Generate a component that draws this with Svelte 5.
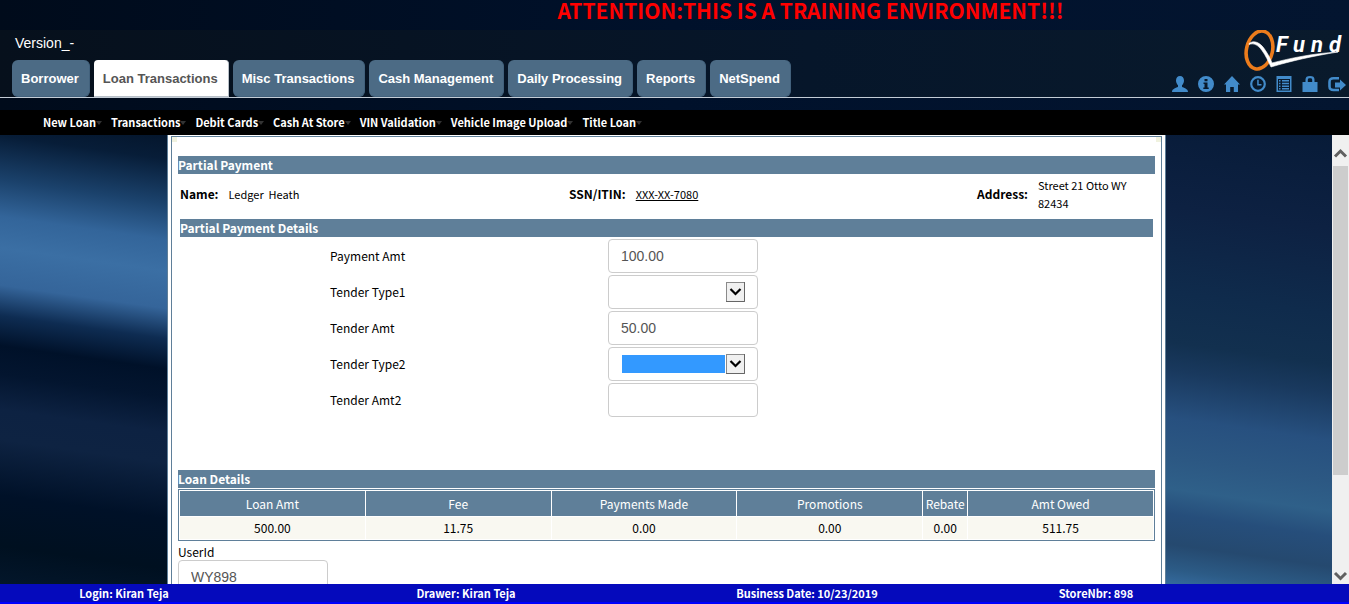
<script>
  const tabs = [
    'Borrower',
    'Loan Transactions',
    'Misc Transactions',
    'Cash Management',
    'Daily Processing',
    'Reports',
    'NetSpend'
  ];
  const menu = [
    'New Loan',
    'Transactions',
    'Debit Cards',
    'Cash At Store',
    'VIN Validation',
    'Vehicle Image Upload',
    'Title Loan'
  ];
  const loan = [
    ['Loan Amt', '500.00'],
    ['Fee', '11.75'],
    ['Payments Made', '0.00'],
    ['Promotions', '0.00'],
    ['Rebate', '0.00'],
    ['Amt Owed', '511.75']
  ];
  let activeTab = $state('Loan Transactions');
  let paymentAmt = $state('100.00');
  let tenderAmt = $state('50.00');
  let tenderAmt2 = $state('');
  let userId = $state('WY898');
</script>

{#snippet dropdown(id, selected)}
  <span class="select">
    <select {id} class="field" class:selected>
      <option value=""></option>
      <option>Cash</option>
      <option>Check</option>
    </select>
    <svg class="drop" viewBox="0 0 19 20" aria-hidden="true">
      <rect x="0.5" y="0.5" width="18" height="19" fill="#f0f0f0" stroke="#8a8a8a" />
      <path d="M18.5 0V19.5H0" fill="none" stroke="#666" />
      <path d="M4.5 7l5 5 5-5" fill="none" stroke="#000" stroke-width="2.2" />
    </svg>
  </span>
{/snippet}

<div class="app">
  <div class="attention">ATTENTION:THIS IS A TRAINING ENVIRONMENT!!!</div>

  <header>
    <div class="left">
      <div class="version">Version_-</div>
      <nav class="tabs">
        {#each tabs as tab}
          <button class:active={tab === activeTab} onclick={() => (activeTab = tab)}>{tab}</button>
        {/each}
      </nav>
    </div>
    <div class="right">
      <svg class="logo" width="103" height="42" viewBox="0 0 103 42" role="img" aria-label="QFund">
        <g transform="rotate(13 16.5 20)">
          <ellipse cx="16.5" cy="20" rx="13" ry="19.2" fill="none" stroke="#ec7c1c" stroke-width="3.6" />
        </g>
        <path d="M6 13.500C12 9 18.500 14 22.500 20.500C25.500 25 27.500 29 29 33C48 28 70 23.500 95 22C70 26 48 31 28 37C25.500 32 22.500 25 19 20.500C15.500 15.500 11 12.500 6 14.500Z" fill="#fff" stroke="#fff" stroke-width="0.6" />
        <text x="33 50 68 86" y="22">Fund</text>
      </svg>
      <div class="icons">
        <a href="#profile" aria-label="Profile">
          <svg viewBox="0 0 16 16"><path d="M8 0C5.500 0 4 1.800 4 4.500C4 6.800 5 8.300 6 9.200V10.800C4.500 12 0 12.600 0 16H16C16 12.600 11.500 12 10 10.800V9.200C11 8.300 12 6.800 12 4.500C12 1.800 10.500 0 8 0Z" /></svg>
        </a>
        <a href="#info" aria-label="Information">
          <svg viewBox="0 0 16 16"><path fill-rule="evenodd" d="M8 0A8 8 0 1 0 8 16A8 8 0 1 0 8 0ZM6.500 3H9.500V5.200H6.500ZM5.500 6.500H9.500V11.500H10.700V13H5.300V11.500H6.500V8H5.500Z" /></svg>
        </a>
        <a href="#home" aria-label="Home">
          <svg viewBox="0 0 16 16"><path d="M8 0L16 8.500H14V16H9.800V11H6.200V16H2V8.500H0Z" /></svg>
        </a>
        <a href="#clock" aria-label="Time clock">
          <svg viewBox="0 0 16 16"><circle cx="8" cy="8" r="6.800" fill="none" stroke="#428bca" stroke-width="2.200" /><path d="M7.200 3.800H8.700V8H11.500V9.500H7.200Z" /></svg>
        </a>
        <a href="#list" aria-label="List">
          <svg viewBox="0 0 16 16"><path fill-rule="evenodd" d="M0.500 0H15.500V16H0.500ZM2 3V14.500H14V3Z" /><path d="M3 4H4.500V5.500H3ZM6 4H13V5.500H6ZM3 6.700H4.500V8.200H3ZM6 6.700H13V8.200H6ZM3 9.400H4.500V10.900H3ZM6 9.400H13V10.900H6ZM3 12H4.500V13.500H3ZM6 12H13V13.500H6Z" /></svg>
        </a>
        <a href="#lock" aria-label="Lock">
          <svg viewBox="0 0 16 16"><path fill-rule="evenodd" d="M3.500 6V3.500C3.500 1 5 0 8 0S12.500 1 12.500 3.500V6H15.500V16H0.500V6ZM5.800 6H10.200V4C10.200 2.600 9.500 2.200 8 2.200S5.800 2.600 5.800 4Z" /></svg>
        </a>
        <a href="#logout" aria-label="Log out">
          <svg class="wide" viewBox="0 0 18 16"><path d="M11 2.200H5.500Q1.500 2.200 1.500 6V10.500Q1.500 14 5.500 14H11" fill="none" stroke="#428bca" stroke-width="2.600" /><path d="M7 6.500H12V3.500L18 9L12 14.500V11.500H7Z" /></svg>
        </a>
      </div>
    </div>
  </header>

  <nav class="menu">
    {#each menu as item}
      <a href="#menu">{item}<span class="caret"></span></a>
    {/each}
  </nav>

  <div class="body">
    <main>
      <div class="panel">
        <h1 class="bar">Partial Payment</h1>
        <div class="customer">
          <div class="pair"><b>Name:</b><span>Ledger&nbsp; Heath</span></div>
          <div class="pair"><b>SSN/ITIN:</b><a href="#ssn">XXX-XX-7080</a></div>
          <div class="pair"><b>Address:</b><span class="address">Street 21 Otto WY 82434</span></div>
        </div>
        <h2 class="bar inset">Partial Payment Details</h2>
        <form>
          <label for="payment-amt">Payment Amt</label>
          <input id="payment-amt" class="field" bind:value={paymentAmt} />
          <label for="tender-type1">Tender Type1</label>
          {@render dropdown('tender-type1', false)}
          <label for="tender-amt">Tender Amt</label>
          <input id="tender-amt" class="field" bind:value={tenderAmt} />
          <label for="tender-type2">Tender Type2</label>
          {@render dropdown('tender-type2', true)}
          <label for="tender-amt2">Tender Amt2</label>
          <input id="tender-amt2" class="field" bind:value={tenderAmt2} />
        </form>
        <h2 class="bar">Loan Details</h2>
        <table>
          <thead>
            <tr>
              {#each loan as [name]}<th class:narrow={name === 'Rebate'}>{name}</th>{/each}
            </tr>
          </thead>
          <tbody>
            <tr>
              {#each loan as [, value]}<td>{value}</td>{/each}
            </tr>
          </tbody>
        </table>
        <div class="user">
          <label for="user-id">UserId</label>
          <input id="user-id" class="field" bind:value={userId} />
        </div>
      </div>
    </main>
    <div class="scrollbar" aria-hidden="true">
      <svg viewBox="0 0 17 31"><path d="M3 21.500L8.500 16L14 21.500" /></svg>
      <div class="track"><div class="thumb"></div></div>
      <svg class="down" viewBox="0 0 17 17"><path d="M3 6L8.500 11.500L14 6" /></svg>
    </div>
  </div>

  <footer>
    <span>Login: Kiran Teja</span>
    <span>Drawer: Kiran Teja</span>
    <span>Business Date: 10/23/2019</span>
    <span>StoreNbr: 898</span>
  </footer>
</div>

<style>
  :global(body) {
    margin: 0;
    overflow: hidden;
  }
  .app {
    --slate: #5f7f99;
    --sans: 'Noto Sans CJK SC', 'Open Sans', sans-serif;
    --arial: 'Liberation Sans', Arial, sans-serif;
    display: flex;
    flex-direction: column;
    height: 100vh;
    font: 12px/18px var(--sans);
    color: #000;
    background: linear-gradient(90deg, #000b1b, #00112b 50%, #031530);
  }
  .app :global(*) {
    box-sizing: border-box;
  }
  .attention {
    height: 30px;
    padding-left: 272px;
    text-align: center;
    font-size: 21px;
    line-height: 20px;
    font-weight: 700;
    color: #f00;
  }
  header {
    display: flex;
    justify-content: space-between;
    height: 68px;
    border-bottom: 1px solid #c3ccd6;
    background: linear-gradient(90deg, #06101c, #06162a 60%, #091a2c);
  }
  .left {
    padding-left: 12px;
  }
  .version {
    height: 30px;
    padding-left: 3px;
    font: 14px/27px var(--arial);
    color: #fff;
  }
  .tabs {
    display: flex;
    gap: 4px;
  }
  .tabs button {
    height: 37px;
    padding: 1px 10px 0 9px;
    border: 1px solid #42617c;
    border-width: 0 1px 1px 0;
    border-radius: 6px;
    background: #4c6b85;
    font: bold 13px/35px var(--arial);
    color: #fff;
    white-space: nowrap;
  }
  .tabs button.active {
    border-color: #b8c0c8;
    border-radius: 4px 4px 0 0;
    background: #fff;
    color: #555;
  }
  .right {
    display: flex;
    flex-direction: column;
    align-items: flex-end;
    justify-content: space-between;
    padding: 0 3px 5px 0;
  }
  .logo text {
    font: italic bold 22px 'Liberation Sans Narrow', Roboto, sans-serif;
    fill: #fff;
  }
  .icons {
    display: flex;
    gap: 10px;
  }
  .icons a {
    display: flex;
  }
  .icons svg {
    width: 16px;
    height: 16px;
    fill: #428bca;
  }
  .icons svg.wide {
    width: 18px;
  }
  .menu {
    display: flex;
    gap: 9px;
    height: 25px;
    margin-top: 12px;
    padding-left: 43px;
    background: #000;
  }
  .menu a {
    display: flex;
    align-items: center;
    color: #fff;
    font-size: 11px;
    font-weight: 700;
    line-height: 25px;
    text-decoration: none;
    white-space: nowrap;
  }
  .caret {
    border: 3px solid transparent;
    border-top: 4px solid #333;
    border-bottom: 0;
  }
  .body {
    flex: 1;
    display: flex;
    min-height: 0;
    background:
      linear-gradient(188deg, #04162d 0, #071d38 24px, #1b426c 68px, #33659a 104px, #3b6fa4 135px, #35659a 172px, #0e2c52 202px, #001129 232px, #03152f 260px, #0d2242 295px, #0e2342 325px, #001128 380px, #001020 430px, #04182e 480px) 0 0 / 168px 100% no-repeat,
      linear-gradient(188deg, #071b38 0, #0d2142 95px, #0f2b4c 180px, #12304f 230px, #19395e 258px, #27507f 305px, #2c5883 345px, #2f6089 375px, #264e7b 400px, #25496f 430px, #2c5b86 455px, #376ea3 474px) 100% 0 / 184px 100% no-repeat;
  }
  main {
    flex: 1;
    min-width: 0;
    overflow: hidden;
    padding: 0 166px 0 167px;
  }
  .panel {
    min-height: 600px;
    margin-top: -2px;
    padding: 23px 10px 20px;
    border: 1px solid var(--slate);
    border-width: 0 1px;
    background:
      linear-gradient(#f0f2df, #f0f2df) 4px 4px / 5px 5px no-repeat,
      linear-gradient(#f0f2df, #f0f2df) calc(100% - 4px) 4px / 5px 5px no-repeat,
      #fff;
    box-shadow:
      inset 0 0 0 3px #fff,
      inset 0 0 0 4px var(--slate);
  }
  .bar {
    margin: 0;
    height: 18px;
    font-size: 12px;
    line-height: 18px;
    font-weight: 700;
    color: #fff;
    background: var(--slate);
  }
  .inset {
    margin: 0 2px;
  }
  .customer {
    display: grid;
    grid-template-columns: 389fr 408fr 178fr;
    align-items: center;
    height: 45px;
    padding: 0 0 6px 2px;
  }
  .pair {
    display: flex;
    align-items: center;
    gap: 10px;
    font-size: 11px;
  }
  .pair b {
    font-size: 12px;
  }
  .pair a {
    color: #000;
  }
  .address {
    max-width: 100px;
  }
  form {
    display: grid;
    grid-template-columns: 278fr 547fr;
    align-items: center;
    gap: 2px 0;
    padding: 2px 0 53px 152px;
  }
  .field {
    display: block;
    width: 150px;
    height: 34px;
    padding: 7px 12px;
    border: 1px solid #ccc;
    border-radius: 4px;
    background: #fff;
    font: 14px/18px var(--arial);
    color: #555;
    outline: none;
  }
  .select {
    position: relative;
    width: 150px;
  }
  .select .field {
    appearance: none;
    padding: 7px 32px 7px 13px;
  }
  .select .selected {
    background: #39f content-box;
  }
  .drop {
    position: absolute;
    top: 7px;
    right: 13px;
    width: 19px;
    height: 20px;
    pointer-events: none;
  }
  table {
    width: 100%;
    margin-top: 1px;
    border: 1px solid var(--slate);
    border-spacing: 1px;
    table-layout: fixed;
    text-align: center;
  }
  th {
    height: 25px;
    padding: 0;
    font-weight: 400;
    color: #fff;
    background: var(--slate);
  }
  th.narrow {
    width: 44px;
  }
  td {
    height: 22px;
    padding: 0;
    background: #f9f8f1;
  }
  .user label {
    display: block;
    height: 19px;
    line-height: 21px;
  }
  .scrollbar {
    display: flex;
    flex-direction: column;
    width: 17px;
    background: #f0f0f0;
  }
  .scrollbar svg {
    width: 17px;
    height: 31px;
    fill: none;
    stroke: #606060;
    stroke-width: 3;
  }
  .scrollbar svg.down {
    height: 17px;
  }
  .track {
    flex: 1;
    padding: 0 1px;
  }
  .thumb {
    height: 77%;
    background: #cdcdcd;
  }
  footer {
    display: grid;
    grid-template-columns: 248fr 436fr 246fr 332fr 87fr;
    height: 20px;
    border-bottom: 2px solid #0000fd;
    background: #050abc;
    color: #fff;
    font-size: 11px;
    font-weight: 700;
    line-height: 18px;
    text-align: center;
  }
</style>
